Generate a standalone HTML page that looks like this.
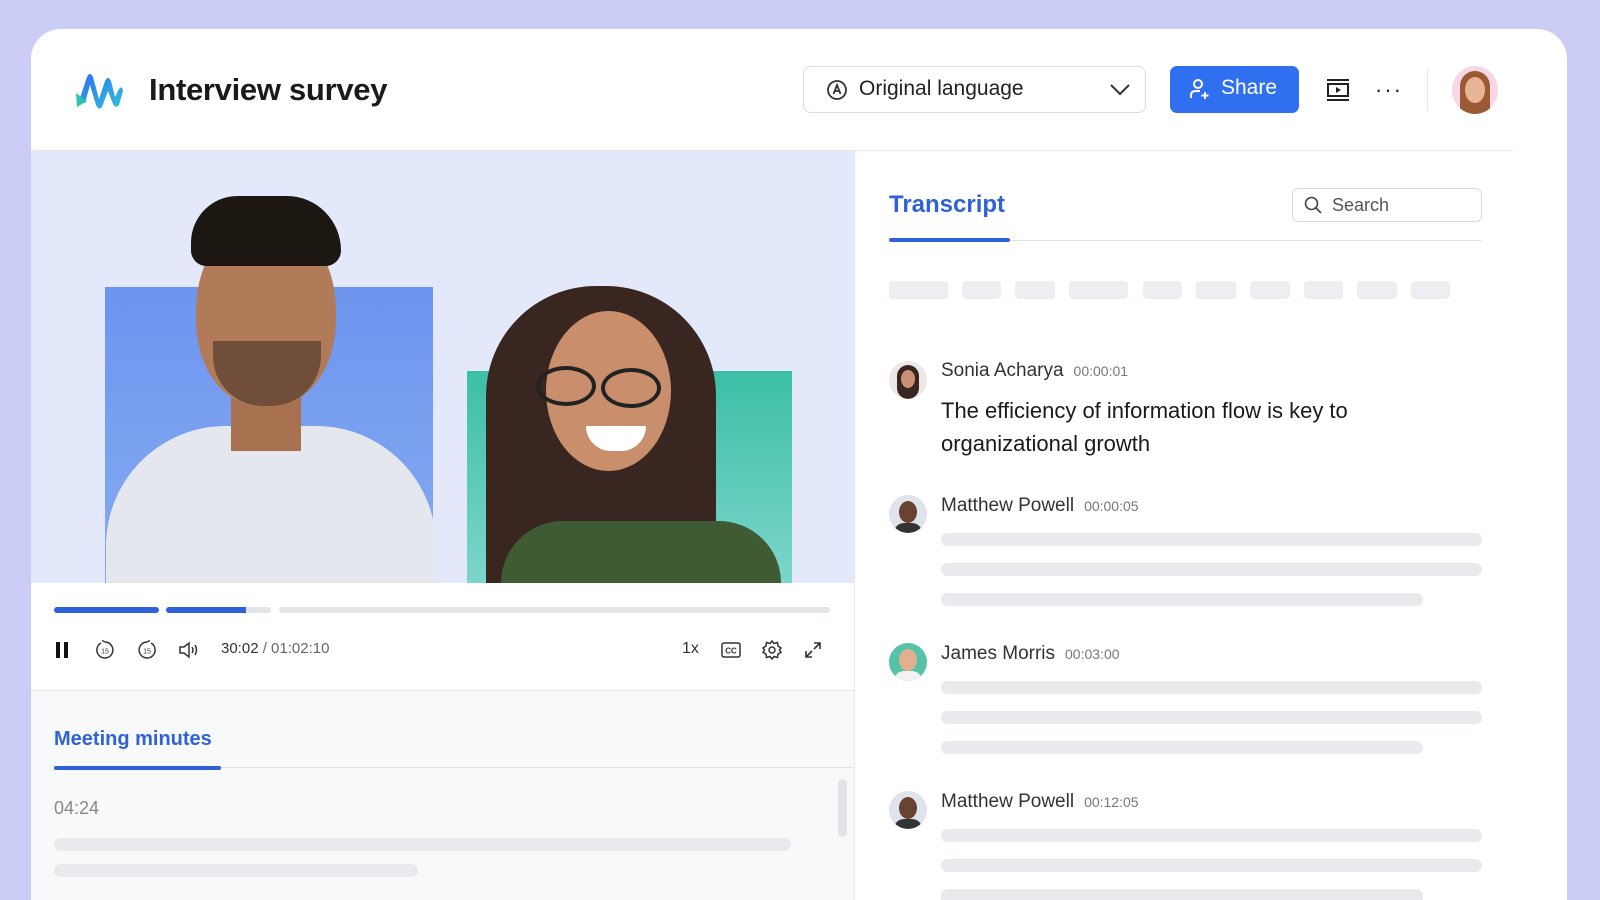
<!DOCTYPE html>
<html><head><meta charset="utf-8"><style>
*{margin:0;padding:0;box-sizing:border-box}
body{width:1600px;height:900px;overflow:hidden;background:#cccdf6;font-family:"Liberation Sans",sans-serif;position:relative}
.a{position:absolute}
.card{left:31px;top:29px;width:1536px;height:871px;background:#fff;border-radius:30px 30px 0 0;overflow:hidden}
.bar{position:absolute;background:#e9eaee;border-radius:7px;height:13px}
.chip{position:absolute;top:252px;height:18px;background:#eceef1;border-radius:4px}
.nm{position:absolute;font-size:19px;color:#333}
.ts{font-size:14px;color:#777;margin-left:10px}
.av{position:absolute;width:38px;height:38px;border-radius:50%;overflow:hidden;background:#dfe3ec}
.ic{position:absolute}
</style></head><body>
<div class="a card">
  <svg class="ic" style="left:44px;top:42px" width="50" height="38" viewBox="0 0 50 38">
    <defs><linearGradient id="g" x1="0" y1="0" x2="1" y2="1"><stop offset="0" stop-color="#2f6ff0"/><stop offset="1" stop-color="#2ec3d8"/></linearGradient></defs>
    <path d="M4 30 L12 6 Q15 0 18 6 L24 28 L30 10 Q33 4 36 10 L40 26 L44 18 Q47 14 48 20 L44 34 Q41 38 38 33 L33 20 L27 36 Q24 40 21 34 L15 14 L10 32Z" fill="url(#g)"/>
    <path d="M1 22 L12 30 L2 36Z" fill="#2ec3b0"/>
  </svg>
  <div class="a" style="left:118px;top:43px;font-size:31px;font-weight:bold;color:#1a1a1a;letter-spacing:-0.3px">Interview survey</div>
  <div class="a" style="left:772px;top:37px;width:343px;height:47px;border:1px solid #dcdde2;border-radius:8px"></div>
  <svg class="ic" style="left:794px;top:49px" width="24" height="24" viewBox="0 0 24 24" fill="none" stroke="#333" stroke-width="1.8"><circle cx="12" cy="12" r="9"/><path d="M8.5 16 L12 7 L15.5 16 M9.7 13 H14.3"/></svg>
  <div class="a" style="left:828px;top:48px;font-size:21px;color:#222">Original language</div>
  <svg class="ic" style="left:1078px;top:52px" width="22" height="16" viewBox="0 0 22 16" fill="none" stroke="#333" stroke-width="2"><path d="M2 4 L11 13 L20 4"/></svg>
  <div class="a" style="left:1139px;top:37px;width:129px;height:47px;background:#2f6ff0;border-radius:7px"></div>
  <svg class="ic" style="left:1157px;top:48px" width="24" height="24" viewBox="0 0 24 24" fill="none" stroke="#fff" stroke-width="2"><circle cx="10" cy="7" r="4"/><path d="M3 21 V18 Q3 14 8 14 H12"/><path d="M17 15 V22 M13.5 18.5 H20.5"/></svg>
  <div class="a" style="left:1190px;top:47px;font-size:21px;color:#fff">Share</div>
  <svg class="ic" style="left:1294px;top:48px" width="26" height="26" viewBox="0 0 26 26" fill="none" stroke="#222" stroke-width="2"><path d="M2 3 H24 M2 23 H24"/><rect x="3" y="7" width="20" height="12"/><path d="M11 10 L16 13 L11 16Z" fill="#222" stroke="none"/></svg>
  <div class="a" style="left:1344px;top:48px;font-size:22px;color:#222;letter-spacing:2px">···</div>
  <div class="a" style="left:1396px;top:40px;width:1px;height:42px;background:#e5e5e5"></div>
  <div class="a" style="left:1421px;top:37px;width:46px;height:48px;border-radius:50%;background:#f7d6e6;overflow:hidden">
    <div class="a" style="left:8px;top:5px;width:30px;height:43px;border-radius:15px 15px 4px 4px;background:#9b5a34"></div>
    <div class="a" style="left:13px;top:11px;width:20px;height:26px;border-radius:50%;background:#e7b596"></div>
  </div>
  <div class="a" style="left:0;top:121px;width:1482px;height:1px;background:#e6e7ea"></div>

  <div class="a" style="left:0;top:122px;width:823px;height:432px;background:#e3e8fb;overflow:hidden">
    <div class="a" style="left:74px;top:136px;width:328px;height:296px;background:linear-gradient(#6d95ef,#86aaf2)"></div>
    <div class="a" style="left:436px;top:220px;width:325px;height:212px;background:linear-gradient(#3cbfa7,#7dd5cc)"></div>
    <div class="a" style="left:75px;top:275px;width:330px;height:157px;border-radius:120px 120px 0 0;background:#e4e7ee"></div>
    <div class="a" style="left:200px;top:220px;width:70px;height:80px;background:#a8714f"></div>
    <div class="a" style="left:165px;top:65px;width:140px;height:190px;border-radius:50% 50% 45% 45%;background:#b17a58"></div>
    <div class="a" style="left:160px;top:45px;width:150px;height:70px;border-radius:60px 70px 20px 20px;background:#1d1712"></div>
    <div class="a" style="left:182px;top:190px;width:108px;height:65px;border-radius:0 0 50px 50px;background:#3a2a22;opacity:.55"></div>
    <div class="a" style="left:455px;top:135px;width:230px;height:297px;border-radius:110px 110px 0 0;background:#3a2620"></div>
    <div class="a" style="left:470px;top:370px;width:280px;height:62px;border-radius:80px 80px 0 0;background:#3e5b33"></div>
    <div class="a" style="left:515px;top:160px;width:125px;height:160px;border-radius:50%;background:#c98f6d"></div>
    <div class="a" style="left:505px;top:215px;width:60px;height:40px;border:4px solid #222;border-radius:50%"></div>
    <div class="a" style="left:570px;top:217px;width:60px;height:40px;border:4px solid #222;border-radius:50%"></div>
    <div class="a" style="left:555px;top:275px;width:60px;height:25px;border-radius:0 0 30px 30px;background:#fff"></div>
  </div>
  <div class="a" style="left:0;top:554px;width:823px;height:108px;background:#fff"></div>
  <div class="a" style="left:23px;top:578px;width:105px;height:6px;border-radius:3px;background:#2f62d8"></div>
  <div class="a" style="left:135px;top:578px;width:80px;height:6px;border-radius:3px 0 0 3px;background:#2f62d8"></div>
  <div class="a" style="left:215px;top:578px;width:25px;height:6px;border-radius:0 3px 3px 0;background:#e3e4e7"></div>
  <div class="a" style="left:248px;top:578px;width:551px;height:6px;border-radius:3px;background:#e3e4e7"></div>
  <div class="a" style="left:25px;top:613px;width:4px;height:16px;background:#111"></div>
  <div class="a" style="left:33px;top:613px;width:4px;height:16px;background:#111"></div>
  <svg class="ic" style="left:64px;top:611px" width="20" height="20" viewBox="0 0 20 20" fill="none" stroke="#333" stroke-width="1.5"><path d="M6 3 A8 8 0 1 0 10 2 M10 2 L7 0.5"/><text x="10" y="13.5" font-size="7" text-anchor="middle" fill="#333" stroke="none">15</text></svg>
  <svg class="ic" style="left:106px;top:611px" width="20" height="20" viewBox="0 0 20 20" fill="none" stroke="#333" stroke-width="1.5"><path d="M14 3 A8 8 0 1 1 10 2 M10 2 L13 0.5"/><text x="10" y="13.5" font-size="7" text-anchor="middle" fill="#333" stroke="none">15</text></svg>
  <svg class="ic" style="left:147px;top:611px" width="22" height="20" viewBox="0 0 22 20" fill="none" stroke="#333" stroke-width="1.5"><path d="M2 7 H6 L11 3 V17 L6 13 H2Z"/><path d="M14 7 Q16 10 14 13 M17 5 Q20 10 17 15"/></svg>
  <div class="a" style="left:190px;top:611px;font-size:15px;color:#333">30:02 <span style="color:#666">/ 01:02:10</span></div>
  <div class="a" style="left:651px;top:611px;font-size:16px;color:#333">1x</div>
  <svg class="ic" style="left:689px;top:611px" width="22" height="20" viewBox="0 0 22 20" fill="none" stroke="#333" stroke-width="1.5"><rect x="2" y="3" width="18" height="14" rx="2"/><text x="11" y="13.5" font-size="8" text-anchor="middle" fill="#333" stroke="none" font-weight="bold">CC</text></svg>
  <svg class="ic" style="left:730px;top:610px" width="22" height="22" viewBox="0 0 22 22" fill="none" stroke="#333" stroke-width="1.5"><circle cx="11" cy="11" r="3"/><path d="M11 2 L13 4.5 L16.5 3.5 L17 7 L20 9 L18.5 11 L20 13.5 L17 15 L16.5 18.5 L13 17.5 L11 20 L9 17.5 L5.5 18.5 L5 15 L2 13.5 L3.5 11 L2 9 L5 7 L5.5 3.5 L9 4.5Z"/></svg>
  <svg class="ic" style="left:772px;top:611px" width="20" height="20" viewBox="0 0 20 20" fill="none" stroke="#333" stroke-width="1.6"><path d="M11 3 H17 V9 M17 3 L11 9 M3 11 V17 H9 M3 17 L9 11"/></svg>
  <div class="a" style="left:0;top:661px;width:823px;height:1px;background:#e6e7ea"></div>
  <div class="a" style="left:0;top:662px;width:823px;height:209px;background:#f8f9fb"></div>
  <div class="a" style="left:23px;top:699px;font-size:20px;font-weight:bold;color:#2f62d8">Meeting minutes</div>
  <div class="a" style="left:23px;top:738px;width:799px;height:1px;background:#dfe1e5"></div>
  <div class="a" style="left:23px;top:737px;width:167px;height:4px;border-radius:2px;background:#2f62d8"></div>
  <div class="a" style="left:23px;top:769px;font-size:18px;color:#888">04:24</div>
  <div class="bar" style="left:23px;top:809px;width:737px"></div>
  <div class="bar" style="left:23px;top:835px;width:364px"></div>
  <div class="a" style="left:807px;top:750px;width:9px;height:58px;border-radius:5px;background:#e3e4e7"></div>
  <div class="a" style="left:823px;top:122px;width:1px;height:749px;background:#e6e7ea"></div>

  <div class="a" style="left:858px;top:162px;font-size:24px;font-weight:bold;color:#2f62d8">Transcript</div>
  <div class="a" style="left:858px;top:211px;width:593px;height:1px;background:#dfe1e5"></div>
  <div class="a" style="left:858px;top:209px;width:121px;height:4px;border-radius:2px;background:#2f62d8"></div>
  <div class="a" style="left:1261px;top:159px;width:190px;height:34px;border:1px solid #d8d9de;border-radius:6px"></div>
  <svg class="ic" style="left:1272px;top:166px" width="20" height="20" viewBox="0 0 20 20" fill="none" stroke="#444" stroke-width="1.6"><circle cx="8.5" cy="8.5" r="6"/><path d="M13 13 L18 18"/></svg>
  <div class="a" style="left:1301px;top:166px;font-size:18px;color:#555">Search</div>
  <div class="chip" style="left:858px;width:59px"></div>
  <div class="chip" style="left:931px;width:39px"></div>
  <div class="chip" style="left:984px;width:40px"></div>
  <div class="chip" style="left:1038px;width:59px"></div>
  <div class="chip" style="left:1112px;width:39px"></div>
  <div class="chip" style="left:1165px;width:40px"></div>
  <div class="chip" style="left:1219px;width:40px"></div>
  <div class="chip" style="left:1273px;width:39px"></div>
  <div class="chip" style="left:1326px;width:40px"></div>
  <div class="chip" style="left:1380px;width:39px"></div>

  <div class="av" style="left:858px;top:332px;background:#ece6e6"><div class="a" style="left:8px;top:4px;width:22px;height:34px;border-radius:11px;background:#3a2620"></div><div class="a" style="left:12px;top:9px;width:14px;height:18px;border-radius:50%;background:#c99075"></div></div>
  <div class="nm" style="left:910px;top:331px">Sonia Acharya<span class="ts">00:00:01</span></div>
  <div class="a" style="left:910px;top:365px;font-size:22px;line-height:33px;color:#1a1a1a;width:470px">The efficiency of information flow is key to organizational growth</div>

  <div class="av" style="left:858px;top:466px"><div class="a" style="left:10px;top:6px;width:18px;height:22px;border-radius:50%;background:#6a4330"></div><div class="a" style="left:5px;top:28px;width:28px;height:10px;border-radius:10px 10px 0 0;background:#333"></div></div>
  <div class="nm" style="left:910px;top:466px">Matthew Powell<span class="ts">00:00:05</span></div>
  <div class="bar" style="left:910px;top:504px;width:541px"></div>
  <div class="bar" style="left:910px;top:534px;width:541px"></div>
  <div class="bar" style="left:910px;top:564px;width:482px"></div>

  <div class="av" style="left:858px;top:614px;background:#56c3a8"><div class="a" style="left:10px;top:6px;width:18px;height:22px;border-radius:50%;background:#e0b08f"></div><div class="a" style="left:5px;top:28px;width:28px;height:10px;border-radius:10px 10px 0 0;background:#f2f2f2"></div></div>
  <div class="nm" style="left:910px;top:614px">James Morris<span class="ts">00:03:00</span></div>
  <div class="bar" style="left:910px;top:652px;width:541px"></div>
  <div class="bar" style="left:910px;top:682px;width:541px"></div>
  <div class="bar" style="left:910px;top:712px;width:482px"></div>

  <div class="av" style="left:858px;top:762px"><div class="a" style="left:10px;top:6px;width:18px;height:22px;border-radius:50%;background:#6a4330"></div><div class="a" style="left:5px;top:28px;width:28px;height:10px;border-radius:10px 10px 0 0;background:#333"></div></div>
  <div class="nm" style="left:910px;top:762px">Matthew Powell<span class="ts">00:12:05</span></div>
  <div class="bar" style="left:910px;top:800px;width:541px"></div>
  <div class="bar" style="left:910px;top:830px;width:541px"></div>
  <div class="bar" style="left:910px;top:860px;width:482px;height:11px;border-radius:7px 7px 0 0"></div>
</div>
</body></html>
